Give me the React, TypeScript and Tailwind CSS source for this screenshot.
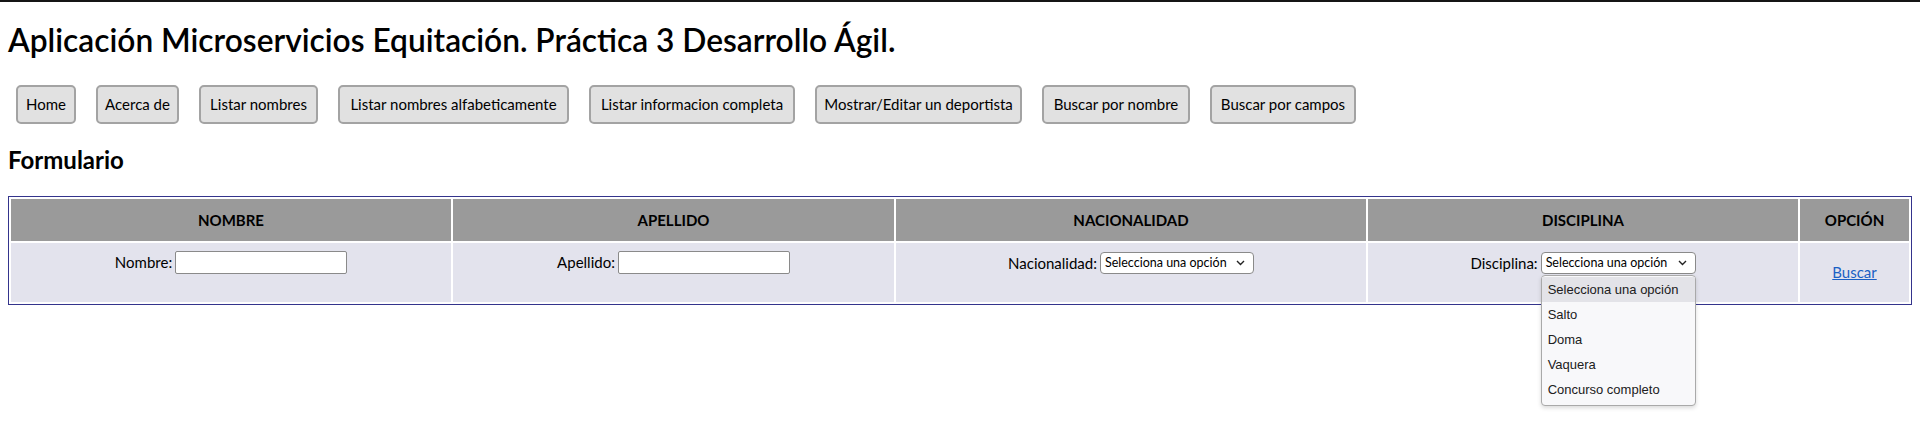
import React from "react";

const buttons: { label: string; w: string }[] = [
  { label: "Home", w: "w-[60px]" },
  { label: "Acerca de", w: "w-[83px]" },
  { label: "Listar nombres", w: "w-[119px]" },
  { label: "Listar nombres alfabeticamente", w: "w-[231px]" },
  { label: "Listar informacion completa", w: "w-[206px]" },
  { label: "Mostrar/Editar un deportista", w: "w-[207px]" },
  { label: "Buscar por nombre", w: "w-[148px]" },
  { label: "Buscar por campos", w: "w-[146px]" },
];

function Chevron() {
  return (
    <svg width="9" height="6" viewBox="0 0 9 6" className="shrink-0">
      <polyline points="1,1 4.5,4.5 8,1" fill="none" stroke="#222" strokeWidth="1.4" />
    </svg>
  );
}

function FakeSelect({ w, open }: { w: string; open?: boolean }) {
  return (
    <div className={`relative ${w} h-[22px]`}>
      <div className="flex h-full w-full items-center justify-between rounded-[4px] border border-[#8a8a8a] bg-white pl-[4px] pr-[8px] text-[12.5px] text-black">
        <span>Selecciona una opción</span>
        <Chevron />
      </div>
      {open && (
        <div className="absolute left-0 top-[23px] z-10 w-[155px] rounded-[4px] border border-[#a9a9a9] bg-[#f8f8fa] pt-[1px] pb-[3px] shadow-[0_2px_4px_rgba(0,0,0,0.15)] font-['Liberation_Sans',Arial,sans-serif] text-[13px] text-[#202020]">
          {["Selecciona una opción", "Salto", "Doma", "Vaquera", "Concurso completo"].map((o, i) => (
            <div
              key={o}
              className={`flex h-[25px] items-center pl-[6px] ${i === 0 ? "bg-[#e3e3e8]" : ""}`}
            >
              {o}
            </div>
          ))}
        </div>
      )}
    </div>
  );
}

function TextInput() {
  return <div className="h-[23px] w-[172px] rounded-[2px] border border-[#8a8a8a] bg-white" />;
}

export default function App() {
  return (
    <div className="min-h-[429px] bg-white font-['Lato','Liberation_Sans',sans-serif] text-black">
      <div className="h-[2px] bg-[#151515]" />
      <div className="px-[8px]">
        <h1 className="mt-[19px] text-[31.7px] font-semibold leading-[38px]">
          Aplicación Microservicios Equitación. Práctica 3 Desarrollo Ágil.
        </h1>
        <div className="mt-[26px] flex gap-[20px] pl-[8px]">
          {buttons.map((b) => (
            <div
              key={b.label}
              className={`${b.w} flex h-[39px] items-center justify-center rounded-[5px] border-2 border-[#a3a3a3] bg-[#e1e1e1] text-[15px] whitespace-nowrap`}
            >
              {b.label}
            </div>
          ))}
        </div>
        <h2 className="mt-[21px] text-[24px] font-bold leading-[29px]">Formulario</h2>
        <div className="mt-[22px] grid grid-cols-[440px_441px_470px_430px_109px] gap-[2px] border border-[#34348c] p-[2px]">
          {["NOMBRE", "APELLIDO", "NACIONALIDAD", "DISCIPLINA", "OPCIÓN"].map((h) => (
            <div key={h} className="flex h-[42px] items-center justify-center bg-[#9a9a9a] text-[15px] font-bold">
              {h}
            </div>
          ))}
          <div className="flex h-[59px] justify-center bg-[#e3e3ed] pt-[8px]">
            <div className="flex h-[23px] items-center gap-[3px] text-[15px]">
              <span>Nombre:</span>
              <TextInput />
            </div>
          </div>
          <div className="flex h-[59px] justify-center bg-[#e3e3ed] pt-[8px]">
            <div className="flex h-[23px] items-center gap-[3px] text-[15px]">
              <span>Apellido:</span>
              <TextInput />
            </div>
          </div>
          <div className="flex h-[59px] justify-center bg-[#e3e3ed] pt-[9px]">
            <div className="flex h-[22px] items-center gap-[3px] text-[15px]">
              <span>Nacionalidad:</span>
              <FakeSelect w="w-[154px]" />
            </div>
          </div>
          <div className="flex h-[59px] justify-center bg-[#e3e3ed] pt-[9px]">
            <div className="flex h-[22px] items-center gap-[3px] text-[15px]">
              <span>Disciplina:</span>
              <FakeSelect w="w-[155px]" open />
            </div>
          </div>
          <div className="flex h-[59px] items-center justify-center bg-[#e3e3ed]">
            <span className="text-[15px] text-[#1a5fc4] underline">Buscar</span>
          </div>
        </div>
      </div>
    </div>
  );
}
